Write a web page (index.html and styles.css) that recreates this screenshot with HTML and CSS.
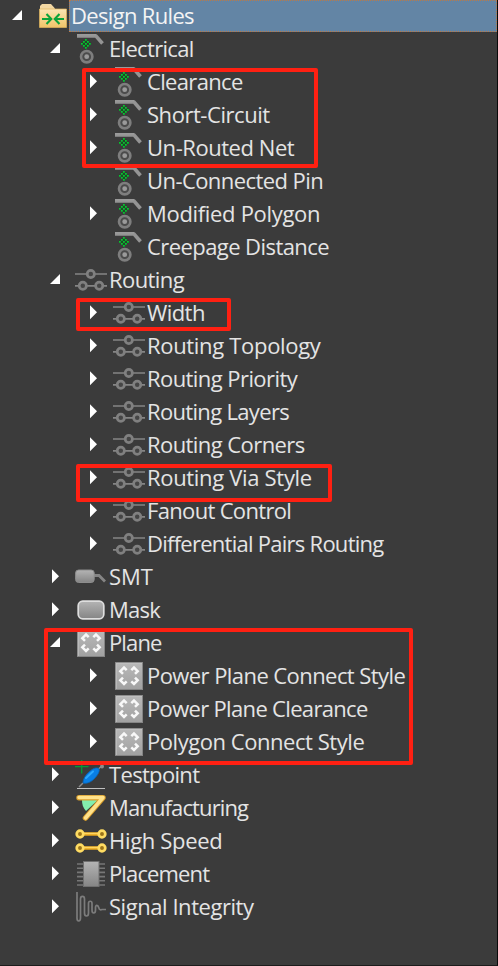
FILE: index.html
```html
<!DOCTYPE html>
<html lang="en">
<head>
<meta charset="utf-8">
<title>Design Rules</title>
<link rel="stylesheet" href="styles.css">
</head>
<body>
<svg class="defs" width="0" height="0" aria-hidden="true">
  <defs>
    <linearGradient id="gFolder" x1="0" y1="0" x2="0" y2="1"><stop offset="0" stop-color="#fbe5b4"/><stop offset="1" stop-color="#f0c468"/></linearGradient>
    <linearGradient id="gMetal" x1="0" y1="0" x2="0" y2="1"><stop offset="0" stop-color="#b4b4b4"/><stop offset="1" stop-color="#858585"/></linearGradient>
    <linearGradient id="gPlane" x1="0" y1="0" x2="0" y2="1"><stop offset="0" stop-color="#b9b9b9"/><stop offset="1" stop-color="#a1a1a1"/></linearGradient>
  </defs>
  <symbol id="open" viewBox="0 0 16 33"><path d="M12 10V20H2Z" fill="#fff"/></symbol>
  <symbol id="closed" viewBox="0 0 16 33"><path d="M4 8.200L11 15.200L4 22.200Z" fill="#fff"/></symbol>
  <symbol id="folder" viewBox="0 0 34 33">
    <path d="M3 9V6L5 4H14L18 8.500V10H3Z" fill="#f3d7a2"/>
    <path d="M2.500 9H29.500V27.500H2.500Z" fill="url(#gFolder)" stroke="#e1b45c" stroke-width=".7"/>
    <path d="M5 19H14M9.500 14L14.300 19L9.500 24M27 19H18M22.500 14L17.700 19L22.500 24" fill="none" stroke="#0ba33b" stroke-width="2.100"/>
  </symbol>
  <symbol id="elec" viewBox="0 0 34 33">
    <path d="M2 3H21L27.500 10.500" fill="none" stroke="#949494" stroke-width="3.600"/>
    <path d="M2 1.700H21" stroke="#ababab" stroke-width=".8"/>
    <path d="M10 6h2v1.500h2v2h2v2.500h-2v2h-2v2h-2v-2h-2v-2h-2v-2.500h2v-2h2z" fill="#1d4a25"/>
    <path d="M10 6h1.800v1.800h-1.800zM8 8h1.800v1.800h-1.800zM12 8h1.800v1.800h-1.800zM6 10h1.800v1.800h-1.800zM10 10h1.800v1.800h-1.800zM14 10h1.800v1.800h-1.800zM8 12h1.800v1.800h-1.800zM12 12h1.800v1.800h-1.800zM10 14h1.800v1.800h-1.800z" fill="#08c432"/>
    <circle cx="11.700" cy="23.700" r="5.700" fill="#4b4b4b" stroke="#7e7e7e" stroke-width="2.600"/>
    <circle cx="11.700" cy="23.700" r="2.400" fill="#9a9a9a"/>
  </symbol>
  <symbol id="route" viewBox="0 0 34 33">
    <path d="M0 10H11.500M20 10H32M0 21.800H3.500M12 21.800H20M28.500 21.800H32" stroke="#858585" stroke-width="1.700"/>
    <g fill="#454545" stroke="#808080" stroke-width="2.700"><circle cx="15.800" cy="10" r="3.600"/><circle cx="7.800" cy="21.800" r="3.600"/><circle cx="24.200" cy="21.800" r="3.600"/></g>
  </symbol>
  <symbol id="smt" viewBox="0 0 34 33">
    <path d="M19 14.500H24L30 20.500" fill="none" stroke="#858585" stroke-width="2.800"/>
    <rect x=".6" y="9" width="18.600" height="12.500" rx="3" fill="url(#gMetal)" stroke="#8d8d8d"/>
  </symbol>
  <symbol id="mask" viewBox="0 0 34 33"><rect x="3.200" y="7.200" width="25.600" height="17.600" rx="4.500" fill="url(#gMetal)" stroke="#dedede" stroke-width="1.700"/></symbol>
  <symbol id="plane" viewBox="0 0 34 33">
    <rect x="2.500" y="2.500" width="27" height="27" fill="url(#gPlane)" stroke="#858585"/>
    <path d="M3.300 29V3.300H29" fill="none" stroke="#c4c4c4" stroke-width=".8"/>
    <path d="M13.700 10.200L11 7.500L7.300 11.200L10 13.900M18.300 10.200L21 7.500L24.700 11.200L22 13.900M13.700 21.300L11 24L7.300 20.300L10 17.600M18.300 21.300L21 24L24.700 20.300L22 17.600" fill="none" stroke="#f8f8f8" stroke-width="2.500"/>
  </symbol>
  <symbol id="test" viewBox="0 0 34 33">
    <path d="M4 28L8 24M22 11L27 7" stroke="#8b8b8b" stroke-width="1.500"/>
    <path d="M8 24C8 19 12 14 17 10.500C20 8.500 23 8.500 24 10C25 12 23 16 19 20C16 23 12 25 8 24Z" fill="#087ee5" stroke="#0764b8" stroke-width=".8"/>
    <path d="M11 19L18 12.500" stroke="#2ba8ff" stroke-width="2" stroke-linecap="round"/>
    <circle cx="27" cy="7.500" r="2" fill="#8d8d8d"/>
    <path d="M6.700 1V14.500M0 7.700H13.500" stroke="#079b34" stroke-width="1.300"/>
    <path d="M2 29.500H30" stroke="#c0c0c0"/>
  </symbol>
  <symbol id="mfg" viewBox="0 0 34 33">
    <path d="M7 8H23L11 19C8 16 7 12 7 8Z" fill="#83efae"/>
    <path d="M4 5.700H28L10.500 26" fill="none" stroke="#d99e2b" stroke-width="5.500" stroke-linecap="round" stroke-linejoin="round"/>
    <path d="M4 5.500H28L10.500 26" fill="none" stroke="#ffe28b" stroke-width="3.500" stroke-linecap="round" stroke-linejoin="round"/>
  </symbol>
  <symbol id="speed" viewBox="0 0 34 33">
    <path d="M5 9H27M5 23H27" stroke="#eba91c" stroke-width="3.500"/><path d="M5 8.500H27M5 22.500H27" stroke="#ffd660" stroke-width="1.300"/>
    <g fill="#9b7419" stroke="#ffdc62" stroke-width="2.700"><circle cx="5" cy="9" r="3.300"/><circle cx="27" cy="9" r="3.300"/><circle cx="5" cy="23" r="3.300"/><circle cx="27" cy="23" r="3.300"/></g>
  </symbol>
  <symbol id="chip" viewBox="0 0 34 33">
    <path d="M2 6H30M2 10.200H30M2 14.400H30M2 18.600H30M2 22.800H30M2 27H30" stroke="#777" stroke-width="1.600"/>
    <rect x="8.500" y="3.500" width="15.500" height="25" fill="url(#gMetal)" stroke="#707070"/>
  </symbol>
  <symbol id="signal" viewBox="0 0 34 33"><path d="M2 1V27C2 31 5.500 31 5.500 27V8C5.500 4.500 9.500 4.500 9.500 8V22C9.500 26 13.500 26 13.500 22V12.500C13.500 9.500 17 9.500 17 12.500V19C17 23 20.500 23 20.500 19V16.500C20.500 13.500 23 14 23.700 16.500C24.500 19.500 26 19 27 18.500H31" fill="none" stroke="#7c7c7c" stroke-width="1.700"/></symbol>
</svg>
<main class="tree">
  <div class="row l0"><svg class="arrow"><use href="#open"/></svg><svg class="icon"><use href="#folder"/></svg><span class="label selected t4">Design Rules</span></div>
  <div class="row l1"><svg class="arrow"><use href="#open"/></svg><svg class="icon"><use href="#elec"/></svg><span class="label t4">Electrical</span></div>
  <div class="row l2"><svg class="arrow"><use href="#closed"/></svg><svg class="icon"><use href="#elec"/></svg><span class="label t4">Clearance</span></div>
  <div class="row l2"><svg class="arrow"><use href="#closed"/></svg><svg class="icon"><use href="#elec"/></svg><span class="label t2">Short-Circuit</span></div>
  <div class="row l2"><svg class="arrow"><use href="#closed"/></svg><svg class="icon"><use href="#elec"/></svg><span class="label t2">Un-Routed Net</span></div>
  <div class="row l2"><svg class="arrow"></svg><svg class="icon"><use href="#elec"/></svg><span class="label t3">Un-Connected Pin</span></div>
  <div class="row l2"><svg class="arrow"><use href="#closed"/></svg><svg class="icon"><use href="#elec"/></svg><span class="label t1">Modified Polygon</span></div>
  <div class="row l2"><svg class="arrow"></svg><svg class="icon"><use href="#elec"/></svg><span class="label t3">Creepage Distance</span></div>
  <div class="row l1"><svg class="arrow"><use href="#open"/></svg><svg class="icon"><use href="#route"/></svg><span class="label t3">Routing</span></div>
  <div class="row l2"><svg class="arrow"><use href="#closed"/></svg><svg class="icon"><use href="#route"/></svg><span class="label t3">Width</span></div>
  <div class="row l2"><svg class="arrow"><use href="#closed"/></svg><svg class="icon"><use href="#route"/></svg><span class="label t1">Routing Topology</span></div>
  <div class="row l2"><svg class="arrow"><use href="#closed"/></svg><svg class="icon"><use href="#route"/></svg><span class="label t3">Routing Priority</span></div>
  <div class="row l2"><svg class="arrow"><use href="#closed"/></svg><svg class="icon"><use href="#route"/></svg><span class="label t4">Routing Layers</span></div>
  <div class="row l2"><svg class="arrow"><use href="#closed"/></svg><svg class="icon"><use href="#route"/></svg><span class="label t3">Routing Corners</span></div>
  <div class="row l2"><svg class="arrow"><use href="#closed"/></svg><svg class="icon"><use href="#route"/></svg><span class="label t1">Routing Via Style</span></div>
  <div class="row l2"><svg class="arrow"><use href="#closed"/></svg><svg class="icon"><use href="#route"/></svg><span class="label t4">Fanout Control</span></div>
  <div class="row l2"><svg class="arrow"><use href="#closed"/></svg><svg class="icon"><use href="#route"/></svg><span class="label t5">Differential Pairs Routing</span></div>
  <div class="row l1"><svg class="arrow"><use href="#closed"/></svg><svg class="icon"><use href="#smt"/></svg><span class="label">SMT</span></div>
  <div class="row l1"><svg class="arrow"><use href="#closed"/></svg><svg class="icon"><use href="#mask"/></svg><span class="label t5">Mask</span></div>
  <div class="row l1"><svg class="arrow"><use href="#open"/></svg><svg class="icon"><use href="#plane"/></svg><span class="label t6">Plane</span></div>
  <div class="row l2"><svg class="arrow"><use href="#closed"/></svg><svg class="icon"><use href="#plane"/></svg><span class="label t3">Power Plane Connect Style</span></div>
  <div class="row l2"><svg class="arrow"><use href="#closed"/></svg><svg class="icon"><use href="#plane"/></svg><span class="label t4">Power Plane Clearance</span></div>
  <div class="row l2"><svg class="arrow"><use href="#closed"/></svg><svg class="icon"><use href="#plane"/></svg><span class="label t2">Polygon Connect Style</span></div>
  <div class="row l1"><svg class="arrow"><use href="#closed"/></svg><svg class="icon"><use href="#test"/></svg><span class="label t4">Testpoint</span></div>
  <div class="row l1"><svg class="arrow"><use href="#closed"/></svg><svg class="icon"><use href="#mfg"/></svg><span class="label t6">Manufacturing</span></div>
  <div class="row l1"><svg class="arrow"><use href="#closed"/></svg><svg class="icon"><use href="#speed"/></svg><span class="label t1">High Speed</span></div>
  <div class="row l1"><svg class="arrow"><use href="#closed"/></svg><svg class="icon"><use href="#chip"/></svg><span class="label t6">Placement</span></div>
  <div class="row l1"><svg class="arrow"><use href="#closed"/></svg><svg class="icon"><use href="#signal"/></svg><span class="label t2">Signal Integrity</span></div>
  <div class="mark mark-electrical"></div>
  <div class="mark mark-width"></div>
  <div class="mark mark-via"></div>
  <div class="mark mark-plane"></div>
</main>
</body>
</html>
```
FILE: styles.css
```css
* { box-sizing: border-box; }
body { margin: 0; background: #3b3b3b; }
.defs { position: absolute; }
.tree {
  position: relative;
  width: 498px;
  height: 966px;
  overflow: hidden;
  border-right: 1px solid #090909;
  border-bottom: 1px solid #1c1c1c;
  font-family: "Open Sans", "Noto Sans", sans-serif;
  font-size: 22px;
  color: #e4e4e4;
}
.row { display: flex; height: 33px; }
.l0 { padding-left: 10px; }
.l1 { padding-left: 48px; }
.l2 { padding-left: 86px; }
.arrow { flex: none; width: 16px; height: 33px; margin-right: 11px; }
.icon { flex: none; width: 34px; height: 33px; margin-right: -2px; }
.label { padding-left: 2px; line-height: 31px; white-space: nowrap; }
.selected {
  flex: 1;
  height: 32px;
  color: #f4f4f4;
  background: #6385a5;
  border: 1px dotted #bd7a45;
  padding-left: 1px;
  line-height: 29px;
}
/* Letter tracking steps */
.t1 { letter-spacing: -0.32px; }
.t2 { letter-spacing: -0.45px; }
.t3 { letter-spacing: -0.57px; }
.t4 { letter-spacing: -0.67px; }
.t5 { letter-spacing: -0.74px; }
.t6 { letter-spacing: -0.87px; }
.mark { position: absolute; border: 4px solid #ff2012; border-radius: 2px; }
.mark-electrical { left: 82px; top: 68px; width: 236px; height: 100px; }
.mark-width { left: 76px; top: 298px; width: 155px; height: 33px; }
.mark-via { left: 76px; top: 464px; width: 256px; height: 38px; }
.mark-plane { left: 44px; top: 628px; width: 369px; height: 137px; }
```
